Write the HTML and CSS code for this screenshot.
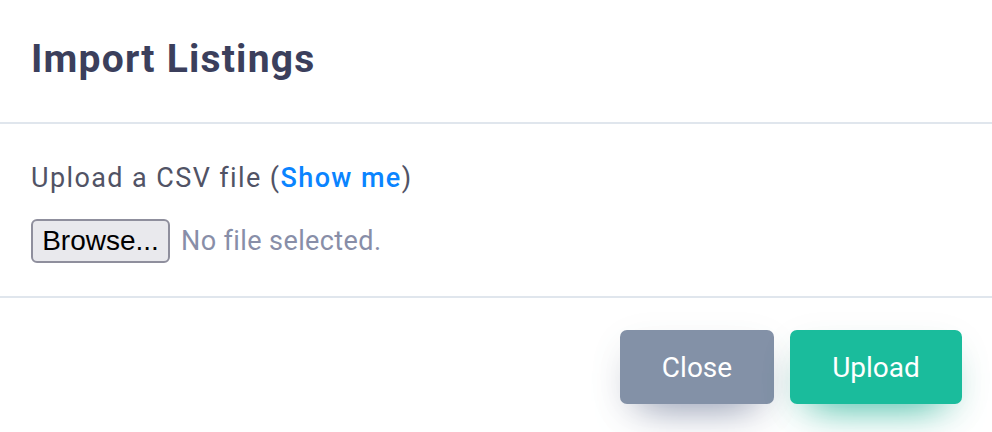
FILE: index.html
```html
<!DOCTYPE html>
<html>
<head>
<meta charset="utf-8">
<link rel="stylesheet" href="styles.css">
</head>
<body>
<div class="modal">
  <div class="modal-header">
    <h1 class="modal-title">Import Listings</h1>
  </div>
  <div class="modal-body">
    <p class="hint">Upload a CSV file (<a class="link" href="#">Show me</a>)</p>
    <div class="file-row">
      <button class="browse">Browse...</button>
      <span class="file-status">No file selected.</span>
    </div>
  </div>
  <div class="modal-footer">
    <button class="btn btn-close">Close</button>
    <button class="btn btn-upload">Upload</button>
  </div>
</div>
</body>
</html>
```
FILE: styles.css
```css
html, body {
  margin: 0;
  padding: 0;
  background: #ffffff;
  font-family: Roboto, "Liberation Sans", sans-serif;
}
.modal {
  width: 992px;
  height: 432px;
  overflow: hidden;
}
.modal-header {
  height: 124px;
  box-sizing: border-box;
  padding: 0 31px 4px;
  display: flex;
  align-items: center;
  border-bottom: 2px solid #e0e6ed;
}
.modal-title {
  margin: 0;
  font-size: 39px;
  line-height: 44px;
  font-weight: 700;
  letter-spacing: 1.2px;
  color: #3b3f5c;
}
.modal-body {
  height: 174px;
  box-sizing: border-box;
  padding: 38px 31px 0;
  border-bottom: 2px solid #e0e6ed;
}
.hint {
  margin: 0;
  font-size: 27px;
  line-height: 32px;
  letter-spacing: 1.4px;
  color: #515365;
}
.link {
  color: #0a84ff;
  font-weight: 500;
  text-decoration: none;
}
.file-row {
  margin-top: 25px;
  display: flex;
  align-items: center;
  gap: 11px;
}
.browse {
  width: 139px;
  height: 44px;
  padding: 0;
  font-family: "Liberation Sans", Arial, sans-serif;
  font-size: 28px;
  color: #000;
  background: #e9e9ed;
  border: 2px solid #8f8f9d;
  border-radius: 6px;
}
.file-status {
  font-size: 27px;
  letter-spacing: 0.4px;
  color: #888ea8;
}
.modal-footer {
  display: flex;
  justify-content: flex-end;
  gap: 16px;
  padding: 32px 30px 0;
}
.btn {
  height: 74px;
  border: none;
  border-radius: 7px;
  font-family: Roboto, "Liberation Sans", sans-serif;
  font-size: 28px;
  font-weight: 400;
  color: #ffffff;
  padding: 0;
}
.btn-close {
  width: 154px;
  background: #8391a7;
  box-shadow: 0 10px 40px 0 rgba(0, 0, 0, 0.05), 0 20px 40px -20px #7d89a8;
}
.btn-upload {
  width: 172px;
  background: #1abc9c;
  box-shadow: 0 10px 40px 0 rgba(0, 0, 0, 0.05), 0 20px 40px -20px #1abc9c;
}
```
